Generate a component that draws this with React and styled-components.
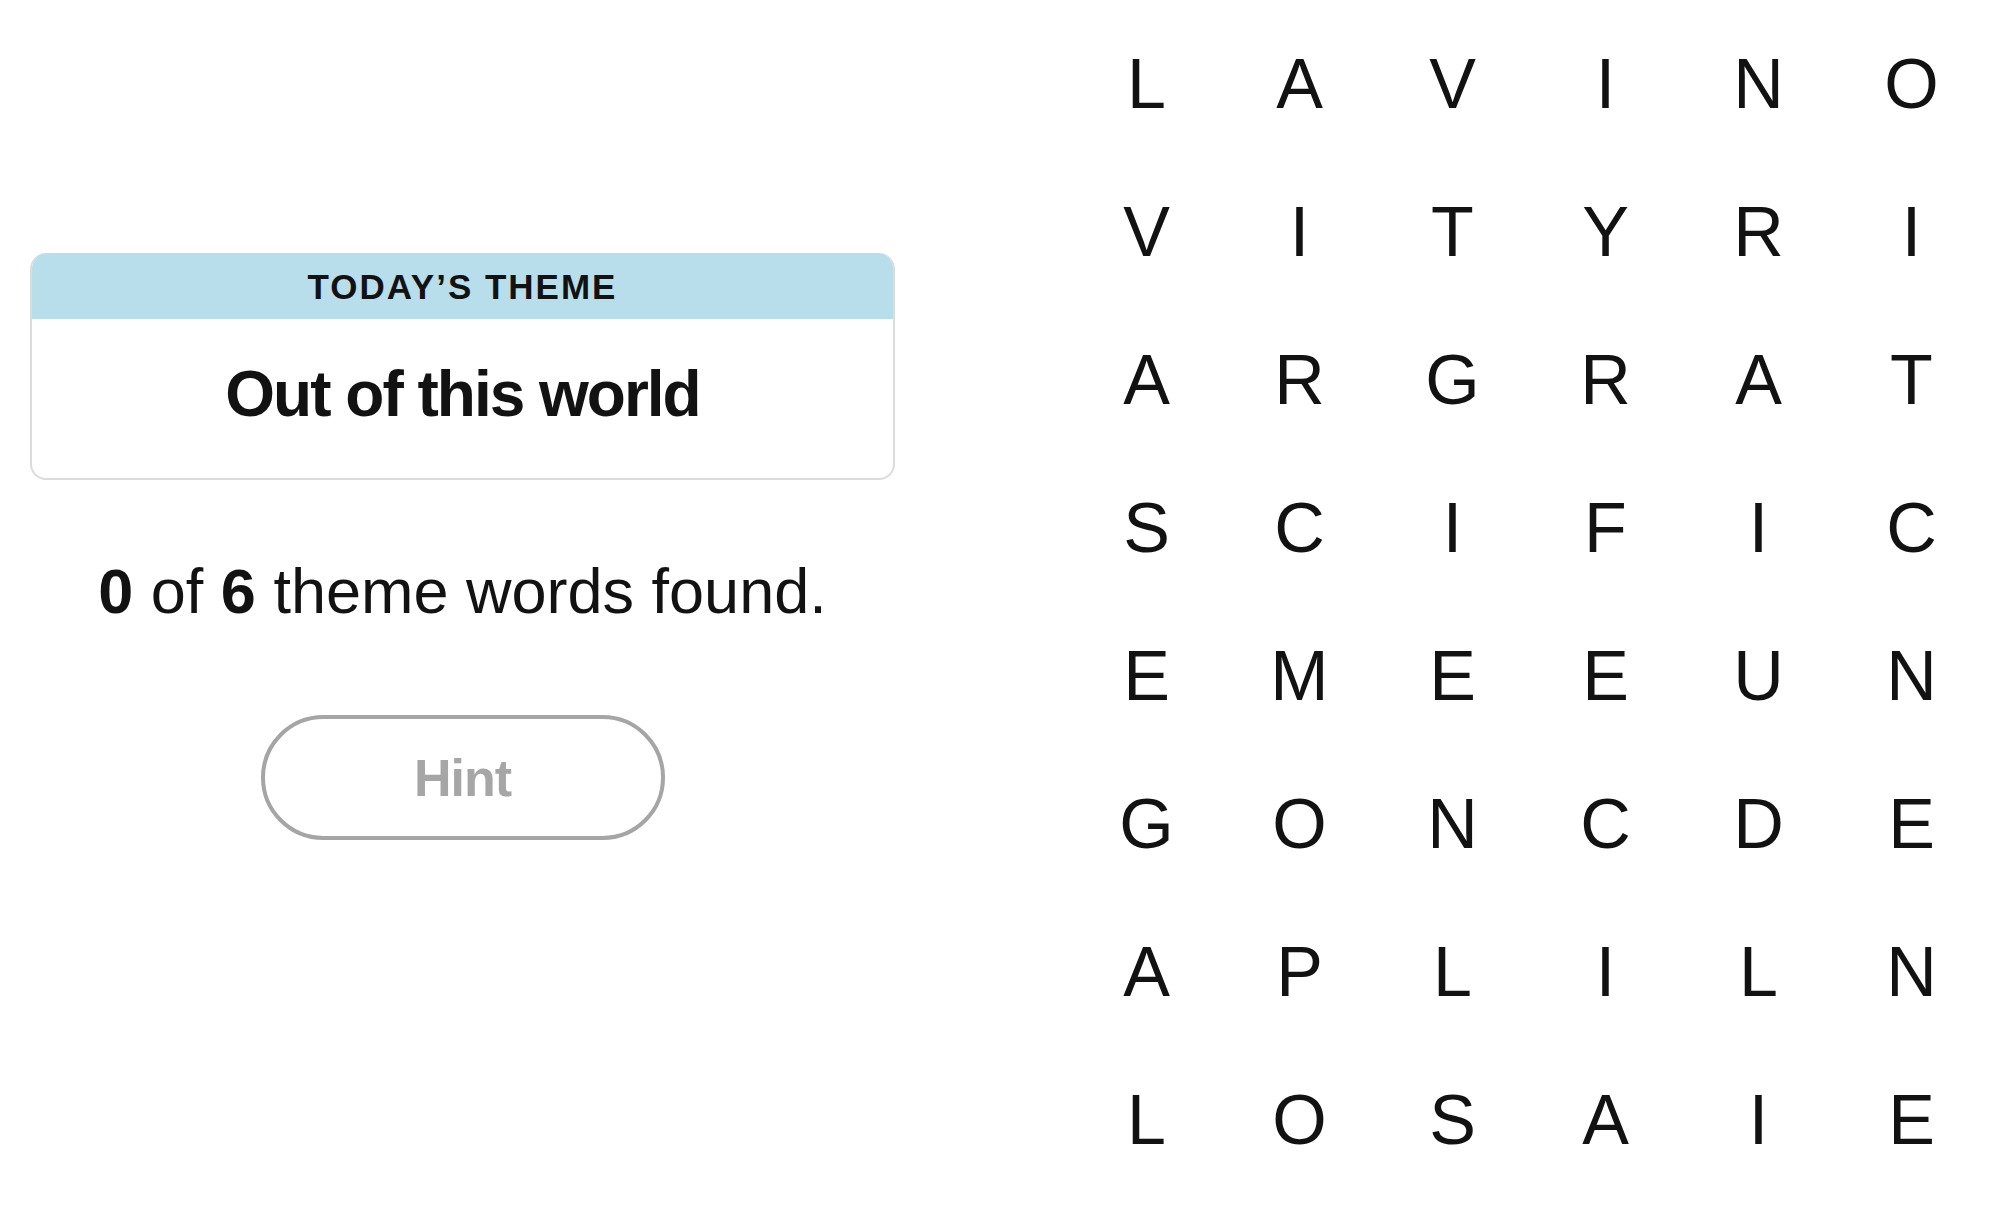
import React from "react";
import styled, { createGlobalStyle } from "styled-components";

const GlobalStyle = createGlobalStyle`
  body {
    margin: 0;
    background: #ffffff;
    font-family: "Liberation Sans", Arial, sans-serif;
    color: #121212;
  }
`;

const Page = styled.main`
  display: flex;
  width: 2000px;
  height: 1208px;
  overflow: hidden;
`;

const Sidebar = styled.section`
  width: 925px;
  box-sizing: border-box;
  padding: 253px 30px 0;
  display: flex;
  flex-direction: column;
  align-items: center;
`;

const ThemeCard = styled.div`
  width: 100%;
  box-sizing: border-box;
  border: 2px solid #dcdcdc;
  border-top: none;
  border-radius: 16px;
  overflow: hidden;
`;

const ThemeHeader = styled.div`
  height: 66px;
  margin: 0 -2px;
  background: #b8ddeb;
  display: flex;
  align-items: center;
  justify-content: center;
`;

const ThemeLabel = styled.span`
  font-size: 35px;
  line-height: 1;
  font-weight: 700;
  letter-spacing: 2px;
  text-transform: uppercase;
`;

const ThemeBody = styled.div`
  height: 159px;
  box-sizing: border-box;
  padding-bottom: 9px;
  display: flex;
  align-items: center;
  justify-content: center;
`;

const ThemeTitle = styled.h1`
  margin: 0;
  font-size: 64px;
  line-height: 1;
  font-weight: 700;
  letter-spacing: -2px;
`;

const Counter = styled.p`
  margin: 75px 0 0;
  font-size: 63px;
  line-height: 72px;
  font-weight: 400;

  b {
    font-weight: 700;
  }
`;

const HintButton = styled.button`
  margin-top: 88px;
  width: 404px;
  height: 125px;
  box-sizing: border-box;
  border: 4px solid #a5a5a5;
  border-radius: 63px;
  background: #ffffff;
  color: #a6a6a6;
  font-family: "Liberation Sans", Arial, sans-serif;
  font-size: 52px;
  line-height: 1;
  font-weight: 700;
  letter-spacing: -1px;
  padding: 0;
  cursor: default;
`;

const Board = styled.section`
  margin-left: 145px;
  padding-top: 10px;
  display: grid;
  grid-template-columns: repeat(6, 153px);
  grid-template-rows: repeat(8, 148px);
`;

const Letter = styled.span`
  display: flex;
  align-items: center;
  justify-content: center;
  font-size: 70px;
  line-height: 1;
  font-weight: 400;
  color: #121212;
`;

const rows = [
  "LAVINO",
  "VITYRI",
  "ARGRAT",
  "SCIFIC",
  "EMEEUN",
  "GONCDE",
  "APLILN",
  "LOSAIE",
];

export default function App() {
  return (
    <>
      <GlobalStyle />
      <Page>
        <Sidebar>
          <ThemeCard>
            <ThemeHeader>
              <ThemeLabel>Today’s Theme</ThemeLabel>
            </ThemeHeader>
            <ThemeBody>
              <ThemeTitle>Out of this world</ThemeTitle>
            </ThemeBody>
          </ThemeCard>
          <Counter>
            <b>0</b> of <b>6</b> theme words found.
          </Counter>
          <HintButton type="button">Hint</HintButton>
        </Sidebar>
        <Board>
          {rows.map((row, r) =>
            row.split("").map((ch, c) => <Letter key={`${r}-${c}`}>{ch}</Letter>)
          )}
        </Board>
      </Page>
    </>
  );
}
